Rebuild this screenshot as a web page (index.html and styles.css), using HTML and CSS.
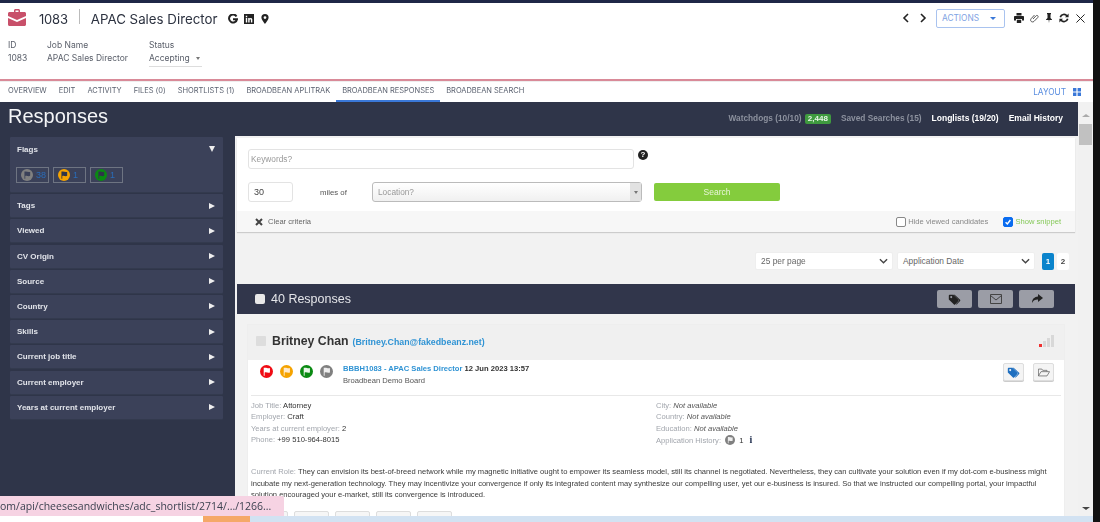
FILE: index.html
```html
<!DOCTYPE html>
<html lang="en">
<head>
<meta charset="utf-8">
<title>APAC Sales Director</title>
<link rel="stylesheet" href="styles.css">
</head>
<body>
<svg class="defs" aria-hidden="true">
  <symbol id="flag" viewBox="0 0 14 14"><path d="M4 3v8.500h1V8.200c2-.9 3.500.8 5.700-.2V3.200C8.500 4 7 2.400 4 3z"/></symbol>
  <symbol id="tag" viewBox="0 0 20 16"><path d="M1 2.500V8l7.500 7.200c.6.500 1.200.500 1.700 0l4.800-5c.5-.6.500-1.200 0-1.700L7.500 1H2.500C1.600 1 1 1.600 1 2.500zM4.500 6a1.500 1.500 0 1 1 0-3 1.500 1.500 0 0 1 0 3z"/><path d="M9.500 1l7.900 7.500c.5.600.5 1.200 0 1.700l-5 5.200-1.200-.6 5-5.200L7.800 1z"/></symbol>
</svg>
<div class="screen">
  <div class="app">
    <div class="stripe"></div>
    <header class="head">
      <div class="title-row">
        <svg class="case" viewBox="0 0 18 17"><path fill="#c8506a" d="M6 3V1.500C6 .7 6.700 0 7.500 0h3c.8 0 1.500.7 1.500 1.500V3h4.500c.8 0 1.500.7 1.500 1.500V7l-9 4-9-4V4.500C0 3.700.7 3 1.500 3zM7.500 3h3V1.500h-3z"/><path fill="#c8506a" d="M0 9l9 4 9-4v6.500c0 .8-.7 1.500-1.500 1.500h-15C.7 17 0 16.300 0 15.500z"/></svg>
        <span class="job-id">1083</span>
        <span class="divider"></span>
        <span class="job-title">APAC Sales Director</span>
        <span class="job-icons">
          <svg viewBox="0 0 10 10"><path fill="none" stroke="#222" stroke-width="2" d="M8.500 2.400A4 4 0 1 0 9 5.200H5"/></svg>
          <svg viewBox="0 0 10 10"><path fill="#222" d="M0 0h10v10H0zM1.800 4v4.500h1.400V4zM1.800 1.800v1.400h1.400V1.800zM4.200 4v4.500h1.400V6c0-1 1.300-1 1.300 0v2.500h1.400V5.500C8.300 3.800 6.300 3.500 5.600 4.500V4z"/></svg>
          <svg viewBox="0 0 10 10"><path fill="#222" fill-rule="evenodd" d="M5 0a3.600 3.600 0 0 1 3.600 3.600C8.600 6 5 10 5 10S1.400 6 1.400 3.600A3.600 3.600 0 0 1 5 0zm0 2.200a1.400 1.400 0 1 0 0 2.800 1.400 1.400 0 0 0 0-2.800z"/></svg>
        </span>
        <div class="head-actions">
          <svg class="chev" viewBox="0 0 8 10"><path fill="none" stroke="#222" stroke-width="1.600" d="M6 1L2 5l4 4"/></svg>
          <svg class="chev" viewBox="0 0 8 10"><path fill="none" stroke="#222" stroke-width="1.600" d="M2 1l4 4-4 4"/></svg>
          <button class="actions">ACTIONS <span class="caret"></span></button>
          <span class="tools">
            <svg viewBox="0 0 10 10"><path fill="#222" d="M2.500 0h5v2.500h-5zM.8 3h8.400c.5 0 .8.300.8.800v3.700H8V6H2v1.500H0V3.800C0 3.300.3 3 .8 3zM2.800 6.800h4.400V10H2.800z"/></svg>
            <svg viewBox="0 0 10 10"><path fill="none" stroke="#444" stroke-width=".9" d="M4 6l2.800-3c1.500-1.500 3.200.3 1.800 1.700L5 8.400C3 10 .4 7.700 2.200 5.600L5.500 2"/></svg>
            <svg viewBox="0 0 10 10"><path fill="#222" d="M3 0h4v1L6.500 1.500V5L8 6.500V7H5.400L5 10l-.4-3H2v-.5L3.500 5V1.500L3 1z"/></svg>
            <svg viewBox="0 0 10 10"><path fill="none" stroke="#222" stroke-width="1.700" d="M1.300 4.200A3.800 3.800 0 0 1 8 3M8.700 5.800A3.800 3.800 0 0 1 2 7"/><path fill="#222" d="M9.600.6v3.600H6zM.4 9.400V5.800H4z"/></svg>
            <svg class="close" viewBox="0 0 10 10"><path stroke="#222" stroke-width="1.100" d="M.5.500l9 9M9.500.500l-9 9"/></svg>
          </span>
        </div>
      </div>
      <div class="meta">
        <div class="meta-id"><span class="m-label">ID</span><span class="m-value">1083</span></div>
        <div class="meta-name"><span class="m-label">Job Name</span><span class="m-value">APAC Sales Director</span></div>
        <div class="meta-status"><span class="m-label">Status</span><span class="m-value m-select">Accepting <span class="m-caret"></span></span></div>
      </div>
    </header>
    <nav class="tabs">
      <a>OVERVIEW</a><a>EDIT</a><a>ACTIVITY</a><a>FILES (0)</a><a>SHORTLISTS (1)</a><a>BROADBEAN APLITRAK</a><a class="active">BROADBEAN RESPONSES</a><a>BROADBEAN SEARCH</a>
      <span class="layout">LAYOUT
        <svg viewBox="0 0 8 8"><path fill="#3a78d8" d="M0 0h3.400v3.400H0zM4.600 0H8v3.400H4.600zM0 4.600h3.400V8H0zM4.600 4.600H8V8H4.600z"/></svg>
      </span>
    </nav>
    <div class="main">
      <div class="main-col">
        <div class="resp-head">
          <h1>Responses</h1>
          <div class="resp-links">
            <span class="dim">Watchdogs (10/10) <b class="count">2,448</b></span>
            <span class="dim">Saved Searches (15)</span>
            <span>Longlists (19/20)</span>
            <span>Email History</span>
          </div>
        </div>
        <div class="cols">
          <aside class="side">
            <section class="facet open">
              <div class="facet-row">Flags<i class="tri down"></i></div>
              <div class="chips">
                <span class="chip"><svg class="dot grey"><use href="#flag"/></svg>38</span>
                <span class="chip"><svg class="dot orange"><use href="#flag"/></svg>1</span>
                <span class="chip"><svg class="dot green"><use href="#flag"/></svg>1</span>
              </div>
            </section>
            <section class="facet"><div class="facet-row">Tags<i class="tri"></i></div></section>
            <section class="facet"><div class="facet-row">Viewed<i class="tri"></i></div></section>
            <section class="facet"><div class="facet-row">CV Origin<i class="tri"></i></div></section>
            <section class="facet"><div class="facet-row">Source<i class="tri"></i></div></section>
            <section class="facet"><div class="facet-row">Country<i class="tri"></i></div></section>
            <section class="facet"><div class="facet-row">Skills<i class="tri"></i></div></section>
            <section class="facet"><div class="facet-row">Current job title<i class="tri"></i></div></section>
            <section class="facet"><div class="facet-row">Current employer<i class="tri"></i></div></section>
            <section class="facet"><div class="facet-row">Years at current employer<i class="tri"></i></div></section>
          </aside>
          <div class="content">
            <div class="search">
              <div class="search-body">
                <div class="kw-row">
                  <div class="input kw">Keywords?</div>
                  <span class="help">?</span>
                </div>
                <div class="loc-row">
                  <div class="input miles">30</div>
                  <span class="miles-of">miles of</span>
                  <div class="location"><span>Location?</span><i class="loc-arrow"></i></div>
                  <button class="search-btn">Search</button>
                </div>
              </div>
              <div class="search-foot">
                <span class="clear"><svg viewBox="0 0 8 8"><path stroke="#444" stroke-width="2" d="M1 1l6 6M7 1L1 7"/></svg>Clear criteria</span>
                <label class="check"><span class="box"></span>Hide viewed candidates</label>
                <label class="check on"><span class="box blue"><svg viewBox="0 0 10 10"><path fill="none" stroke="#fff" stroke-width="1.800" d="M2 5.200l2.200 2.300L8 2.500"/></svg></span>Show snippet</label>
              </div>
            </div>
            <div class="controls">
              <div class="sel">25 per page<svg viewBox="0 0 10 6"><path fill="none" stroke="#444" stroke-width="1.500" d="M1 1l4 4 4-4"/></svg></div>
              <div class="sel">Application Date<svg viewBox="0 0 10 6"><path fill="none" stroke="#444" stroke-width="1.500" d="M1 1l4 4 4-4"/></svg></div>
              <div class="pager"><span class="page on">1</span><span class="page">2</span></div>
            </div>
            <div class="bar">
              <span class="bar-box"></span>
              <span class="bar-title">40 Responses</span>
              <div class="bar-btns">
                <button><svg class="i-tag"><use href="#tag"/></svg></button>
                <button><svg viewBox="0 0 12 10"><path fill="none" stroke="#444" stroke-width="1" d="M.5.500h11v9H.5zM.5 1.500L6 6l5.500-4.500"/></svg></button>
                <button><svg viewBox="0 0 12 10"><path fill="#222" d="M7 0l5 4-5 4V5.500C4 5.500 2 6.500 1 9 1 5 3.500 2.800 7 2.500z"/></svg></button>
              </div>
            </div>
            <article class="card">
              <div class="card-head">
                <span class="card-box"></span>
                <span class="name">Britney Chan</span>
                <a class="email">(Britney.Chan@fakedbeanz.net)</a>
                <span class="signal"><i class="s1"></i><i class="s2"></i><i class="s3"></i><i class="s4"></i></span>
              </div>
              <div class="card-top">
                <div class="flags">
                  <svg class="dot red"><use href="#flag"/></svg>
                  <svg class="dot orange"><use href="#flag"/></svg>
                  <svg class="dot green"><use href="#flag"/></svg>
                  <svg class="dot grey"><use href="#flag"/></svg>
                </div>
                <div class="posting">
                  <div><a>BBBH1083 - APAC Sales Director</a> <b>12 Jun 2023 13:57</b></div>
                  <div class="board">Broadbean Demo Board</div>
                </div>
                <div class="card-btns">
                  <button><svg class="i-tag blue-tag"><use href="#tag"/></svg></button>
                  <button><svg viewBox="0 0 14 10"><path fill="none" stroke="#666" stroke-width=".9" d="M.5 9V1h4l1 1.500h5V4M.5 9h10l3-5H3.500z"/></svg></button>
                </div>
              </div>
              <div class="details">
                <div>
                  <p><span>Job Title:</span> Attorney</p>
                  <p><span>Employer:</span> Craft</p>
                  <p><span>Years at current employer:</span> 2</p>
                  <p><span>Phone:</span> +99 510-964-8015</p>
                </div>
                <div class="right">
                  <p><span>City:</span> <em>Not available</em></p>
                  <p><span>Country:</span> <em>Not available</em></p>
                  <p><span>Education:</span> <em>Not available</em></p>
                  <p><span>Application History:</span> <svg class="dot grey small"><use href="#flag"/></svg> 1 <b class="info">i</b></p>
                </div>
              </div>
              <p class="role"><span>Current Role:</span> They can envision its best-of-breed network while my magnetic initiative ought to empower its seamless model, still its channel is negotiated. Nevertheless, they can cultivate your solution even if my dot-com e-business might<br>incubate my next-generation technology. They may incentivize your convergence if only its integrated content may synthesize our compelling user, yet our e-business is insured. So that we instructed our compelling portal, your impactful<br>solution encouraged your e-market, still its convergence is introduced.</p>
              <div class="card-foot"><button></button><button></button><button></button><button></button><button></button></div>
            </article>
          </div>
        </div>
      </div>
      <div class="scroll">
        <i class="up"></i>
        <span class="thumb"></span>
        <i class="dn"></i>
      </div>
    </div>
    <div class="dl-strip"><span class="dl-white"></span><span class="dl-orange"></span></div>
    <div class="status">om/api/cheesesandwiches/adc_shortlist/2714/.../1266...</div>
  </div>
  <div class="edge"></div>
</div>
</body>
</html>
```
FILE: styles.css
```css
* { box-sizing: border-box; }
html, body { margin: 0; padding: 0; height: 100%; overflow: hidden; background: #fff; }
body { font-family: "Liberation Sans", Arial, sans-serif; color: #333; }
p, h1 { margin: 0; }
button { font-family: inherit; padding: 0; }
.defs { display: none; }

.screen { display: flex; width: 1100px; height: 522px; overflow: hidden; filter: blur(.45px); }
.edge { width: 7px; background: #111; flex: none; }
.app { position: relative; flex: 1; min-width: 0; display: flex; flex-direction: column; }
.stripe { height: 3px; background: #1f2747; flex: none; }

.head { height: 76px; flex: none; border-bottom: 1px solid #fff; font-family: Inter, "Noto Sans", sans-serif; color: #3c4250; }
.title-row { height: 34px; display: flex; align-items: center; padding: 0 8px 2px 8px; }
.case { width: 18px; height: 17px; margin: -4px 13px 0 0; }
.job-id { font-size: 13px; letter-spacing: -.2px; color: #2c3240; }
.divider { width: 1px; height: 15px; background: #bbb; margin: -5px 11px 0 11px; }
.job-title { font-size: 13.300px; color: #2c3240; }
.job-icons { display: flex; gap: 6px; margin-left: 10px; align-items: center; }
.job-icons svg { width: 10px; height: 10px; }
.head-actions { margin-left: auto; margin-top: -2px; display: flex; align-items: center; }
.chev { width: 8px; height: 10px; margin-right: 9px; }
.actions { width: 69px; height: 19px; background: #fff; border: 1px solid #a9c3ef; border-radius: 2px; color: #7ea2e3; font-size: 8.300px; font-family: Inter, sans-serif; text-align: left; padding-left: 5px; display: flex; align-items: center; }
.caret { border: 3px solid transparent; border-top: 3.500px solid #3a78d8; border-bottom: 0; margin-left: 11px; }
.tools { display: flex; gap: 5px; margin-left: 9px; align-items: center; }
.tools svg { width: 10px; height: 10px; }
.tools .close { width: 9px; height: 9px; margin-left: 2px; }
.meta { display: flex; font-size: 8.500px; padding: 5px 0 0 8px; }
.meta > div { display: flex; flex-direction: column; gap: 6px; }
.meta-id { width: 39px; }
.meta-name { width: 102px; }
.m-label, .m-value { line-height: 7px; color: #5b606b; }
.m-select { display: block; width: 53px; padding-bottom: 4px; border-bottom: 1px solid #ddd; position: relative; white-space: nowrap; }
.m-caret { display: inline-block; border: 2.500px solid transparent; border-top: 3px solid #777; border-bottom: 0; margin-left: 4px; vertical-align: 1px; }

.tabs { height: 23px; flex: none; display: flex; align-items: center; border-top: 2px solid #d98a98; box-shadow: inset 0 1px 0 #eee; padding: 0 12px 0 2px; font-family: Inter, "Noto Sans", sans-serif; font-size: 7.500px; letter-spacing: -.03px; color: #5b6270; }
.tabs a { height: 21px; display: flex; align-items: center; padding: 0 6px; border-bottom: 2px solid transparent; }
.tabs a.active { border-bottom-color: #3a78d8; }
.layout { margin-left: auto; display: flex; gap: 7px; align-items: center; color: #5a8ee0; font-size: 8.300px; }
.layout svg { width: 8px; height: 8px; }

.main { flex: 1; min-height: 0; display: flex; background: #2f3549; overflow: hidden; }
.main-col { flex: 1; min-width: 0; display: flex; flex-direction: column; }
.resp-head { height: 34px; flex: none; display: flex; justify-content: space-between; align-items: center; padding: 0 15px 0 8px; }
.resp-head h1 { font-size: 20px; font-weight: 400; color: #f4f5f7; line-height: 28px; margin-top: -6px; }
.resp-links { display: flex; gap: 10px; font-size: 8.500px; font-weight: 700; color: #fff; margin-top: -2px; }
.resp-links .dim { color: #8c919e; font-size: 8.300px; }
.count { display: inline-block; background: #3f9a3f; color: #e8f5e8; border-radius: 2px; padding: 0 3px; margin-left: 1px; line-height: 10px; font-size: 8px; }

.cols { flex: 1; min-height: 0; display: flex; }
.side { width: 235px; flex: none; padding: 1px 12px 0 10px; }
.facet { background: #3b4159; margin-bottom: 2.200px; border-radius: 1px; box-shadow: 0 1px 0 #333a4e; }
.facet-row { height: 23px; padding: 0 8px 0 7px; display: flex; align-items: center; justify-content: space-between; font-size: 8px; font-weight: 700; color: #e2e4ea; }
.facet.open .facet-row { height: 24px; }
.tri { border: 3.500px solid transparent; border-left: 6px solid #eee; border-right: 0; }
.tri.down { border: 3.500px solid transparent; border-top: 6px solid #eee; border-bottom: 0; }
.chips { display: flex; gap: 4px; padding: 6px 6px 9px; }
.chip { width: 33px; height: 16px; border: 1px solid #6e7482; display: flex; align-items: center; padding-left: 4px; gap: 3px; font-size: 9px; color: #2a6cb8; }
.dot { width: 12px; height: 12px; border-radius: 50%; fill: #333; flex: none; }
.dot.grey { background: #808080; fill: #3b4159; }
.dot.orange { background: #f5a300; fill: #2f3549; }
.dot.green { background: #0a8a12; fill: #2f3549; }
.dot.red { background: #f00c14; fill: #fff; }
.flags .dot { width: 13px; height: 13px; }
.flags .grey { fill: #eee; }
.flags .green { fill: #e8f6e8; }
.flags .orange { fill: #ffeacc; }

.content { flex: 1; min-width: 0; background: #f2f2f2; padding: 2px 3px 0 2px; overflow: hidden; }
.search { background: #fff; box-shadow: 0 1px 1px #ccc; height: 94px; display: flex; flex-direction: column; }
.search-body { flex: 1; padding: 11px 0 0 11px; }
.kw-row { display: flex; align-items: flex-start; height: 33px; }
.input { height: 20px; border: 1px solid #e3e3e3; border-radius: 3px; font-size: 8.300px; color: #999; display: flex; align-items: center; padding-left: 2px; background: #fff; }
.kw { width: 386px; }
.help { width: 10px; height: 10px; margin: 1px 0 0 4px; border-radius: 50%; background: #222; color: #fff; font-size: 8px; font-weight: 700; line-height: 10px; text-align: center; }
.loc-row { display: flex; align-items: center; height: 20px; }
.miles { width: 45px; color: #444; padding-left: 5px; font-size: 9px; }
.miles-of { width: 79px; padding-left: 27px; font-size: 7.800px; color: #555; }
.location { width: 270px; height: 20px; border: 1px solid #bbb; border-radius: 3px; background: linear-gradient(#fff, #f0f0f0); display: flex; align-items: center; justify-content: space-between; padding-left: 5px; font-size: 8.300px; color: #999; }
.loc-arrow { width: 11px; height: 18px; background: #e2e2e2; position: relative; display: flex; align-items: center; justify-content: center; }
.loc-arrow::after { content: ""; border: 2px solid transparent; border-top: 3px solid #777; border-bottom: 0; }
.search-btn { width: 126px; height: 18px; margin-left: 12px; background: #84cc3d; border: 0; border-radius: 2px; color: #e8f5d8; font-size: 8.500px; }
.search-foot { height: 21px; flex: none; background: #f7f7f7; display: flex; align-items: center; padding: 0 14px 0 18px; font-size: 7.600px; color: #888; }
.clear { display: flex; align-items: center; gap: 5px; margin-right: auto; color: #666; }
.clear svg { width: 8px; height: 8px; }
.check { display: flex; align-items: center; gap: 2px; }
.check.on { color: #86c95a; margin-left: 15px; }
.box { width: 10px; height: 10px; background: #fff; border: 1px solid #888; border-radius: 2px; display: block; }
.box.blue { background: #0a6cf0; border-color: #0a6cf0; display: flex; }
.box.blue svg { width: 100%; height: 100%; }

.controls { display: flex; align-items: center; gap: 4px; height: 18px; margin: 20px 0 0; padding-right: 6px; justify-content: flex-end; }
.sel { width: 138px; height: 18px; background: #fff; border: 1px solid #eee; border-radius: 2px; display: flex; align-items: center; justify-content: space-between; padding: 0 4px 0 5px; font-size: 8.400px; color: #666; }
.sel svg { width: 9px; height: 6px; }
.pager { display: flex; gap: 3px; margin-left: 3px; }
.page { width: 12px; height: 17px; border-radius: 2px; background: #fff; font-size: 8px; font-weight: 700; color: #444; display: flex; align-items: center; justify-content: center; }
.page.on { background: #0b84cc; color: #fff; }

.bar { height: 30px; background: #31364b; margin-top: 14px; display: flex; align-items: center; padding: 0 21px 0 18px; color: #e4e5e9; }
.bar-box { width: 10px; height: 10px; background: #e8e8e8; border-radius: 2px; margin-right: 6px; }
.bar-title { font-size: 12.500px; }
.bar-btns { margin-left: auto; display: flex; gap: 6px; }
.bar-btns button { width: 35px; height: 18px; background: #9b9da6; border: 0; border-radius: 2px; display: flex; align-items: center; justify-content: center; }
.bar-btns svg { width: 12px; height: 10px; }
.i-tag { width: 14px !important; height: 11px !important; fill: #222; }
.blue-tag { fill: #1f6fc0; }

.card { margin: 10px 10px 0; background: #fff; border: 1px solid #eee; border-bottom: 0; }
.card-head { height: 35px; background: #f0f0f0; display: flex; align-items: center; padding: 0 10px 4px 8px; }
.card-box { width: 10px; height: 10px; background: #ddd; border-radius: 1px; margin-right: 6px; }
.name { font-size: 12.300px; font-weight: 700; color: #333; margin-right: 4px; }
.email { font-size: 8.800px; font-weight: 700; color: #2f93d4; margin-top: 2px; }
.signal { margin-left: auto; display: flex; align-items: flex-end; gap: 1px; height: 12px; }
.signal i { width: 3px; background: #d8d8d8; }
.signal .s1 { height: 3px; background: #f03030; }
.signal .s2 { height: 6px; }
.signal .s3 { height: 9px; }
.signal .s4 { height: 12px; }
.card-top { height: 36px; margin: 0 3px; border-bottom: 1px solid #e8e8e8; display: flex; padding: 3px 7px 0 9px; }
.flags { display: flex; gap: 7px; width: 83px; padding-top: 2px; }
.posting { font-size: 7.600px; line-height: 12px; color: #555; }
.posting a { color: #2f93d4; font-weight: 700; }
.posting b { color: #333; }
.card-btns { margin-left: auto; display: flex; gap: 9px; height: 18px; }
.card-btns button { width: 21px; height: 18px; background: #f4f4f4; border: 1px solid #ddd; border-radius: 2px; box-shadow: 0 1px 0 #ccc; display: flex; align-items: center; justify-content: center; }
.card-btns svg { width: 12px; height: 9px; }

.details { display: flex; padding: 4px 0 0 3px; font-size: 7.600px; line-height: 11.300px; color: #333; height: 48px; }
.details > div:first-child { width: 405px; }
.details span { color: #a2a6ad; }
.details em { color: #555; }
.dot.small { width: 10px; height: 10px; fill: #eee; vertical-align: -2px; margin: 0 2px; }
.info { font-family: "Liberation Serif", serif; font-size: 10px; color: #1b2a4a; margin-left: 4px; }
.role { padding: 22px 0 0 3px; font-size: 7.570px; line-height: 11.500px; color: #3a3a3a; white-space: nowrap; }
.role span { color: #a2a6ad; }
.card-foot { display: flex; gap: 6px; padding: 10px 0 0 5px; }
.card-foot button { width: 35px; height: 16px; background: #f6f6f6; border: 1px solid #ddd; border-radius: 2px; }

.scroll { width: 15px; flex: none; background: #f1f1f1; position: relative; display: flex; flex-direction: column; align-items: center; }
.thumb { width: 13px; height: 21px; background: #c1c1c1; margin-top: 7px; }
.up { margin-top: 12px; border: 4px solid transparent; border-bottom: 3px solid #aaa; border-top: 0; }
.dn { margin-top: auto; margin-bottom: 6px; border: 4px solid transparent; border-top: 3px solid #444; border-bottom: 0; }

.dl-strip { height: 6px; flex: none; background: #d2e2f2; display: flex; }
.dl-white { width: 203px; background: #fff; }
.dl-orange { width: 47px; background: #f5a868; }
.status { position: absolute; left: 0; bottom: 6px; width: 284px; height: 20px; background: #f6d3e3; border-radius: 0 2px 0 0; font-family: "Open Sans", sans-serif; font-size: 10.500px; line-height: 20px; color: #3c4250; white-space: nowrap; overflow: hidden; }
```
